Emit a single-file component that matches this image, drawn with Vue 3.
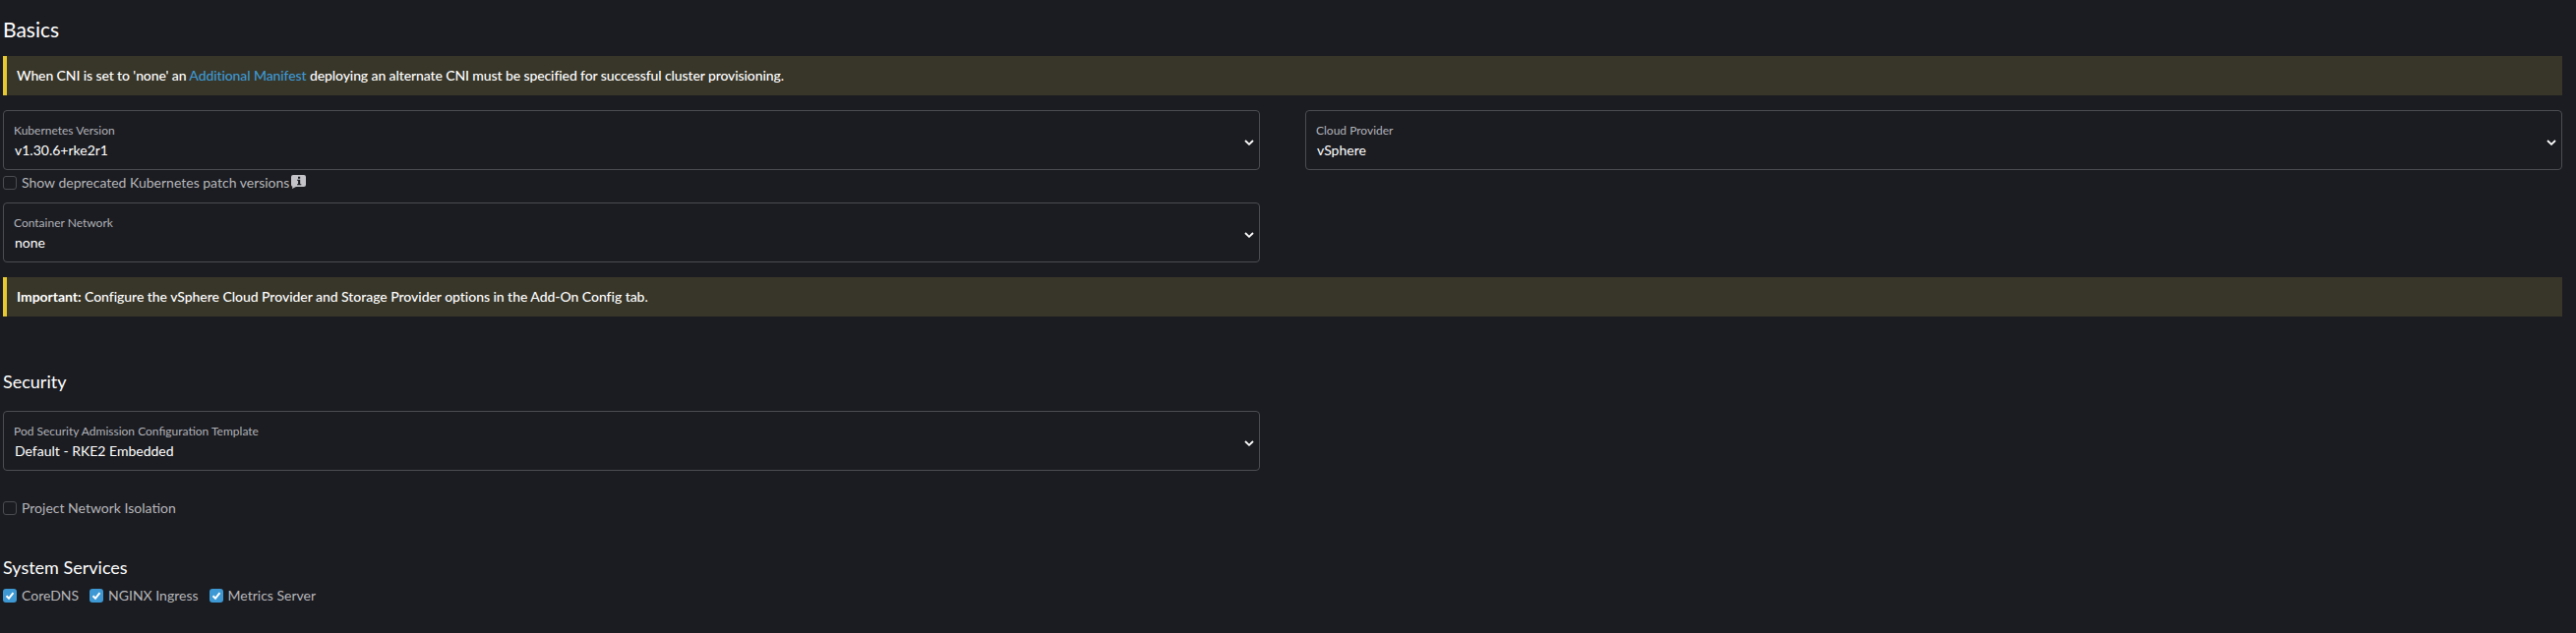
<script setup>
const services = ['CoreDNS', 'NGINX Ingress', 'Metrics Server']
</script>

<template>
  <div class="page">
    <h2 class="basics">Basics</h2>
    <div class="banner first-banner">
      When CNI is set to 'none' an <a class="link">Additional Manifest</a> deploying an alternate CNI must be specified for successful cluster provisioning.
    </div>
    <div class="grid">
      <div class="column">
        <div class="select">
          <div class="select-text">
            <span class="label">Kubernetes Version</span>
            <span class="value">v1.30.6+rke2r1</span>
          </div>
          <svg class="chevron" viewBox="0 0 10 6"><path d="M1 1 5 4.800 9 1" /></svg>
        </div>
        <label class="check deprecated">
          <span class="box"></span>
          <span>Show deprecated Kubernetes patch versions</span>
          <svg class="info" viewBox="0 0 15 14">
            <path d="M2 0h11a2 2 0 0 1 2 2v8a2 2 0 0 1-2 2H5l-4 2 .4-2.200A2 2 0 0 1 0 10V2a2 2 0 0 1 2-2z" fill="#c4c4c8" />
            <path d="M7 1.800h2.200v2H7zM6 4.800h3.200v4.400h1.100v1H6v-1h1.100V5.800H6z" fill="#1b1c21" />
          </svg>
        </label>
        <div class="select network">
          <div class="select-text">
            <span class="label">Container Network</span>
            <span class="value">none</span>
          </div>
          <svg class="chevron" viewBox="0 0 10 6"><path d="M1 1 5 4.800 9 1" /></svg>
        </div>
      </div>
      <div class="column">
        <div class="select">
          <div class="select-text">
            <span class="label">Cloud Provider</span>
            <span class="value">vSphere</span>
          </div>
          <svg class="chevron" viewBox="0 0 10 6"><path d="M1 1 5 4.800 9 1" /></svg>
        </div>
      </div>
    </div>
    <div class="banner second-banner">
      <strong>Important:</strong> Configure the vSphere Cloud Provider and Storage Provider options in the Add-On Config tab.
    </div>

    <h3 class="title security">Security</h3>
    <div class="grid">
      <div class="column">
        <div class="select">
          <div class="select-text">
            <span class="label">Pod Security Admission Configuration Template</span>
            <span class="value">Default - RKE2 Embedded</span>
          </div>
          <svg class="chevron" viewBox="0 0 10 6"><path d="M1 1 5 4.800 9 1" /></svg>
        </div>
      </div>
    </div>
    <label class="check isolation">
      <span class="box"></span>
      <span>Project Network Isolation</span>
    </label>

    <h3 class="title services-title">System Services</h3>
    <div class="services">
      <label v-for="service in services" :key="service" class="check">
        <span class="box checked">
          <svg viewBox="0 0 14 14"><path d="M3.500 7.300 6 9.800 10.500 4.200" /></svg>
        </span>
        <span>{{ service }}</span>
      </label>
    </div>
  </div>
</template>

<style>
html, body {
  margin: 0;
  background: #1b1c21;
}
</style>

<style scoped>
.page {
  box-sizing: border-box;
  height: 644px;
  padding: 18px 14px 0 3px;
  background: #1b1c21;
  color: #e6e6e8;
  font-family: Lato, "Liberation Sans", sans-serif;
  font-size: 14px;
  overflow: hidden;
}
.basics,
.title {
  margin: 0;
  font-weight: 400;
  line-height: 24px;
  color: #fff;
}
.basics {
  font-size: 21px;
}
.title {
  font-size: 18px;
}
.banner {
  box-sizing: border-box;
  height: 40px;
  padding-left: 10px;
  border-left: 4px solid #e5c92f;
  background: #383629;
  color: #fff;
  font-size: 14px;
  line-height: 40px;
  font-weight: 500;
}
.first-banner {
  margin-top: 15px;
  letter-spacing: -0.1px;
}
.link {
  color: #3d98d3;
}
.grid {
  display: grid;
  grid-template-columns: 1278px 1278px;
  column-gap: 46px;
}
.first-banner + .grid {
  margin-top: 15px;
}
.select {
  box-sizing: border-box;
  height: 61px;
  display: flex;
  align-items: center;
  justify-content: space-between;
  padding: 0 5px 0 10px;
  border: 1px solid #4b4c52;
  border-radius: 4px;
}
.select-text {
  display: flex;
  flex-direction: column;
  gap: 4px;
  padding-top: 2px;
}
.label {
  font-size: 12px;
  line-height: 15px;
  color: #b0b1b8;
}
.value {
  margin-left: 1px;
  font-size: 14px;
  line-height: 18px;
  color: #fff;
}
.chevron {
  width: 10px;
  height: 6px;
  margin-top: 5px;
  fill: none;
  stroke: #fff;
  stroke-width: 1.800;
}
.check {
  display: flex;
  align-items: center;
  gap: 5px;
  font-size: 14px;
  line-height: 18px;
  color: #b6b6ba;
}
.box {
  box-sizing: border-box;
  width: 14px;
  height: 14px;
  flex: none;
  border: 1px solid #4b4c52;
  border-radius: 3px;
}
.box.checked {
  border: 0;
  background: #3d98d3;
}
.box svg {
  display: block;
  width: 14px;
  height: 14px;
  fill: none;
  stroke: #fff;
  stroke-width: 2;
}
.deprecated {
  margin-top: 4px;
}
.info {
  width: 15px;
  height: 14px;
  margin: -2px 0 0 -3px;
}
.network {
  margin-top: 11px;
}
.second-banner {
  margin-top: 15px;
  letter-spacing: -0.04px;
}
.security {
  margin-top: 54px;
}
.security + .grid {
  margin-top: 18px;
}
.isolation {
  margin-top: 29px;
}
.services-title {
  margin-top: 39px;
}
.services {
  display: flex;
  gap: 11px;
  margin-top: 8px;
}
</style>
